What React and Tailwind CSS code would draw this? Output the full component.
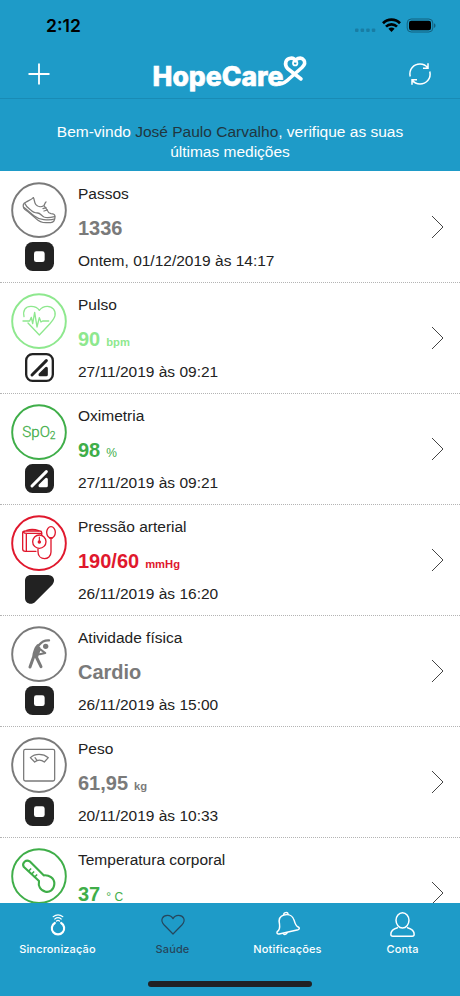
import React from 'react';
import clsx from 'clsx';

const GREY = '#7a7a7a';
const GREEN = '#3fae49';
const LIGHT_GREEN = '#8ee88e';
const RED = '#e0182d';

/* ---------- Measurement icons ---------- */

const ShoeIcon = () => (
  <g transform="translate(0 4)" strokeWidth="3.8">
    <path d="M100 77 C93 84 84 86 77 91 C70 94 68 100 71 108 C75 115 82 116 86 121 L107 139 C116 148 126 152 138 152 L152 152 C160 151 165 144 165 134 C165 127 160 125 153 125 C147 124 144 121 142 115 L133 102" />
    <path d="M100 77 C104 83 102 90 107 97 C112 103 122 107 131 101 C135 98 134 93 138 90" />
    <path d="M75 95 C78 103 84 108 91 113 C98 121 105 123 113 123 C121 123 124 131 132 135 C142 139 155 136 164 134" />
    <path d="M71 106 C83 114 92 124 103 132 C112 139 120 142 131 143 C143 144 155 145 163 141" />
    <path d="M129 110 L138 107 M132 117 L142 114" />
  </g>
);

const PulseIcon = () => (
  <g strokeWidth="4">
    <path d="M72 105 C68 86 76 74 93 74 C105 74 113 78 118 86 C124 78 131 74 142 74 C158 74 168 87 165 102 C163 111 156 119 149 127 L118 160 L84 124" />
    <path d="M69 118 H89 L94 107 L98 126 L104 92 L111 136 L118 108 L123 121 L128 118 H146" />
  </g>
);

const OximetryIcon = ({ color }) => (
  <g fill={color} stroke={color} strokeWidth="0.8" fontFamily="Roboto, sans-serif" fontWeight="300">
    <text x="67" y="132" fontSize="43" textLength="83" lengthAdjust="spacingAndGlyphs">SpO</text>
    <text x="149" y="139" fontSize="31">2</text>
  </g>
);

const PressureIcon = () => (
  <g strokeWidth="4">
    <path d="M125 93 V86 C125 83 123 82 119 82 H76 C70 82 68 84 68 89 V136 C68 141 71 143 76 143 H108" />
    <path d="M69 85 C74 91 82 89 90 89 H125 M79 90 V142 M80 80 C90 77 105 77 116 81" />
    <circle cx="118" cy="114" r="20" />
    <path d="M118 100 V112" strokeWidth="3.4" />
    <circle cx="118" cy="115" r="3.2" fill={RED} />
    <ellipse cx="153" cy="86" rx="13" ry="17" />
    <path d="M149 103 H157 M153 104 V145 C153 171 114 172 114 144 V136" />
  </g>
);

const ActivityIcon = () => (
  <g>
    <path d="M147 77 C134 76 124 82 117 91" strokeWidth="7" />
    <path d="M114 93 C106 101 103 112 101 126 L90 157" strokeWidth="9" />
    <path d="M110 106 L109 127 L123 156" strokeWidth="9" />
    <path d="M118 98 L120 104 L113 124 L104 124 L108 102 Z" fill={GREY} strokeWidth="5" />
    <path d="M122 105 L136 115 L119 119" strokeWidth="6" />
    <circle cx="137" cy="95" r="8" fill={GREY} stroke="none" />
  </g>
);

const ScaleIcon = () => (
  <g strokeWidth="3.8">
    <rect x="71" y="71" width="93" height="95" rx="5" />
    <path d="M91 96 C105 83 129 83 145 96 L133 109 C124 102 112 102 104 109 Z" />
    <path d="M105 96 L111 104" />
  </g>
);

const ThermometerIcon = () => (
  <g strokeWidth="6.4">
    <path d="M71 90 C65 79 78 67 89 74 L131 116 C146 114 164 124 163 142 C162 159 149 168 136 165 C121 162 114 148 117 133 Z" />
    <path d="M86 103 L92 97 M95 112 L101 106 M104 121 L110 115" strokeWidth="5" />
  </g>
);

/* ---------- Trend badges ---------- */

const StableBadge = () => (
  <svg viewBox="0 0 87 87" className="h-[29px] w-[29px]">
    <rect width="87" height="87" rx="23" fill="#222" />
    <rect x="27" y="28" width="32" height="32" rx="7" fill="#fff" />
  </svg>
);

const SlopeBadge = ({ outlined }) => (
  <svg viewBox="0 0 87 87" className="h-[29px] w-[29px]">
    <rect x="3.5" y="3.5" width="80" height="80" rx="19" fill={outlined ? '#fff' : '#222'} stroke="#222" strokeWidth="7" />
    <path d="M21 66 L64 23" stroke={outlined ? '#222' : '#fff'} strokeWidth="9" strokeLinecap="round" />
    <path d="M45 65 L64 46 V65 Z" fill={outlined ? '#222' : '#fff'} stroke={outlined ? '#222' : '#fff'} strokeWidth="9" strokeLinejoin="round" />
  </svg>
);

const CornerBadge = () => (
  <svg viewBox="0 0 87 87" className="h-[29px] w-[29px]">
    <path d="M18 0 H70 C87 0 92 18 82 29 L31 80 C20 92 0 86 0 69 V18 C0 7 7 0 18 0 Z" fill="#222" />
  </svg>
);

const MEASUREMENTS = [
  { title: 'Passos', value: '1336', date: 'Ontem, 01/12/2019 às 14:17', color: GREY, text: 'text-[#7a7a7a]', Icon: ShoeIcon, badge: <StableBadge /> },
  { title: 'Pulso', value: '90', unit: 'bpm', date: '27/11/2019 às 09:21', color: LIGHT_GREEN, text: 'text-[#8ee88e]', Icon: PulseIcon, badge: <SlopeBadge outlined /> },
  { title: 'Oximetria', value: '98', unit: '%', lightUnit: true, date: '27/11/2019 às 09:21', color: GREEN, text: 'text-[#3fae49]', Icon: OximetryIcon, badge: <SlopeBadge /> },
  { title: 'Pressão arterial', value: '190/60', unit: 'mmHg', date: '26/11/2019 às 16:20', color: RED, text: 'text-[#e0182d]', Icon: PressureIcon, badge: <CornerBadge /> },
  { title: 'Atividade física', value: 'Cardio', date: '26/11/2019 às 15:00', color: GREY, text: 'text-[#7a7a7a]', Icon: ActivityIcon, badge: <StableBadge /> },
  { title: 'Peso', value: '61,95', unit: 'kg', date: '20/11/2019 às 10:33', color: GREY, text: 'text-[#7a7a7a]', Icon: ScaleIcon, badge: <StableBadge /> },
  { title: 'Temperatura corporal', value: '37', unit: '° C', lightUnit: true, color: GREEN, text: 'text-[#3fae49]', Icon: ThermometerIcon },
];

function MeasurementRow({ title, value, unit, lightUnit, date, color, text, Icon, badge }) {
  return (
    <div className="flex h-[111px] shrink-0 border-t border-dotted border-[#b4b4b4] pl-[11px] pr-4 first:border-transparent">
      <div className="flex w-14 flex-col items-center pt-[10px]">
        <svg viewBox="33 34 168 168" className="h-14 w-14 shrink-0" fill="none" stroke={color} strokeLinecap="round" strokeLinejoin="round">
          <circle cx="117" cy="118.5" r="80.5" strokeWidth="5.8" />
          <Icon color={color} />
        </svg>
        <div className="mt-1">{badge}</div>
      </div>
      <div className="ml-[11px] flex-1 whitespace-nowrap">
        <p className="mt-3 text-[15.5px] leading-5 text-[#222]">{title}</p>
        <p className={clsx('mt-[15px] flex h-[18px] items-baseline text-[20px] font-bold leading-[18px]', text)}>
          <span>{value}</span>
          {unit && (
            <span className={clsx('ml-[6px] leading-none', lightUnit ? 'text-[12px] font-normal' : 'text-[11.2px]')}>{unit}</span>
          )}
        </p>
        <p className="mt-[14px] text-[15.5px] leading-5 text-[#222]">{date}</p>
      </div>
      <svg viewBox="0 0 13 24" className="h-6 w-[13px] self-center" fill="none" stroke="#444" strokeWidth="1">
        <path d="M1 1 L12 12 L1 23" />
      </svg>
    </div>
  );
}

/* ---------- Tab bar ---------- */

const TABS = [
  {
    label: 'Sincronização',
    viewBox: '112.5 210 120 96',
    icon: (
      <>
        <path d="M163 258 A18.5 18.5 0 1 0 182 258" strokeWidth="6.5" />
        <path d="M158 239 C167 232 178 232 187 239 M163 246 C169 241 176 241 182 246 M168 252 C171 249.5 174 249.5 177 252" strokeWidth="3.6" />
      </>
    ),
  },
  {
    label: 'Saúde',
    viewBox: '457.5 210 120 96',
    active: true,
    icon: <path d="M517.5 291 L491 264 C477 249 487 235 501 235 C510 235 515 240 517.5 245 C520 240 525 235 534 235 C548 235 558 249 544 264 Z" strokeWidth="3.6" />,
  },
  {
    label: 'Notificações',
    viewBox: '112.5 210 120 96',
    icon: (
      <g strokeWidth="4.4">
        <path d="M160 234 C147 238 144 248 147 261 C149 275 145 281 140 284 C138 289 141 292 146 291 L203 278 C208 276 207 272 203 270 C196 267 194 261 191 250 C188 239 178 230 160 234 Z" />
        <path d="M160 233 C158 226 172 224 173 232 M158 290 C161 294 168 292 170 287" />
      </g>
    ),
  },
  {
    label: 'Conta',
    viewBox: '457.5 210 120 96',
    icon: (
      <g strokeWidth="4.4">
        <ellipse cx="516" cy="250" rx="19.5" ry="23" />
        <path d="M501 272 C489 275 481 279 481 292 C481 297 483 298 487 298 H545 C549 298 551 297 551 292 C551 279 543 275 531 272" />
      </g>
    ),
  },
];

function TabBar() {
  return (
    <nav className="flex h-[93px] shrink-0 flex-col items-center bg-[#1e9bc8] font-[Inter,sans-serif]">
      <div className="grid w-full grid-cols-4 pt-1">
        {TABS.map((tab) => (
          <div key={tab.label} className={clsx('flex flex-col items-center', tab.active ? 'text-[#26465c]' : 'text-white')}>
            <svg viewBox={tab.viewBox} className="h-8 w-10" fill="none" stroke="currentColor" strokeLinecap="round" strokeLinejoin="round">
              {tab.icon}
            </svg>
            <span className="mt-[2px] text-[11px] font-medium leading-4 tracking-[0.15px]">{tab.label}</span>
          </div>
        ))}
      </div>
      <div className="mt-6 h-[6px] w-[164px] rounded-full bg-[#202124]" />
    </nav>
  );
}

function StatusBar() {
  return (
    <div className="flex h-[49px] items-center justify-between pl-[46px] pr-6 pt-[2px]">
      <span className="font-[Inter,sans-serif] text-[17.5px] font-semibold leading-5 text-black">2:12</span>
      <svg viewBox="0 0 82 16" className="-mt-[2px] h-4 w-[82px]">
        <g fill="#187da4">
          <rect x="1" y="11.5" width="3.5" height="3.5" rx="1" />
          <rect x="6.6" y="11.5" width="3.5" height="3.5" rx="1" />
          <rect x="12.2" y="11.5" width="3.5" height="3.5" rx="1" />
          <rect x="17.8" y="11.5" width="3.5" height="3.5" rx="1" />
        </g>
        <g fill="none" stroke="#000" strokeWidth="2.7">
          <path d="M29 6.2 C33.7 1.5 41.3 1.5 46 6.2" />
          <path d="M32 9.6 C35 6.7 40 6.7 43 9.6" />
        </g>
        <path d="M34.4 11.8 C36.2 10.2 38.8 10.2 40.6 11.8 L37.5 15 Z" fill="#000" />
        <rect x="53.2" y="2" width="25.6" height="13" rx="4" fill="none" stroke="#12607e" />
        <rect x="55" y="3.8" width="22" height="9.4" rx="2.3" fill="#000" />
        <path d="M80 6.2 C82 7 82 10 80 10.8 Z" fill="#12607e" />
      </svg>
    </div>
  );
}

function NavBar() {
  return (
    <div className="flex h-[49px] items-center justify-between pl-7 pr-[28px]">
      <svg viewBox="0 0 22 22" className="h-[22px] w-[22px]" stroke="#fff" strokeWidth="1.8">
        <path d="M11 0.5 V21.5 M0.5 11 H21.5" />
      </svg>
      <svg viewBox="0 0 156 40" className="h-10 w-[156px] overflow-visible">
        <text x="1.5" y="31.5" fill="#fff" stroke="#fff" strokeWidth="0.6" fontFamily="Inter, sans-serif" fontWeight="800" fontSize="27" textLength="131" lengthAdjust="spacingAndGlyphs">
          HopeCare
        </text>
        {/* ribbon heart */}
        <g fill="none" stroke="#fff" strokeWidth="3.6" strokeLinecap="round" strokeLinejoin="round">
          <path d="M129 30 C133 30 136 27 139 24 L151 13.5 C157 7.5 151.5 3 147 4.5 C145.500 5 144.5 5.800 144.2 6.800 C143.5 4.800 141.5 4 139.5 4.2 C134.5 4.8 133 10 136.5 14.500 L150 25" />
          <circle cx="144.2" cy="9.2" r="2.2" strokeWidth="1.8" />
        </g>
      </svg>
      <svg viewBox="0 0 24 24" className="h-6 w-6" fill="none" stroke="#fff" strokeWidth="1.5">
        <path d="M2.2 14.5 C0.5 7 6 2 12 2 C15 2 18 3.4 20 6 M20 1.3 V6.2 H15" />
        <path d="M21.8 9.5 C23.5 17 18 22 12 22 C9 22 6 20.6 4 18 M4 22.7 V17.8 H9" />
      </svg>
    </div>
  );
}

export default function App() {
  return (
    <div className="flex h-[996px] w-[460px] flex-col overflow-hidden bg-white font-['Liberation_Sans',Arial,sans-serif]">
      <header className="h-[171px] shrink-0 bg-[#1e9bc8]">
        <StatusBar />
        <NavBar />
        <div className="border-t border-[#198bb5] pt-[23px] text-center text-[15.5px] leading-5 text-white">
          <p>
            Bem-vindo <span className="text-[#203640]">José Paulo Carvalho</span>, verifique as suas
          </p>
          <p>últimas medições</p>
        </div>
      </header>
      <main className="flex min-h-0 flex-1 flex-col overflow-hidden">
        {MEASUREMENTS.map((m) => (
          <MeasurementRow key={m.title} {...m} />
        ))}
      </main>
      <TabBar />
    </div>
  );
}
